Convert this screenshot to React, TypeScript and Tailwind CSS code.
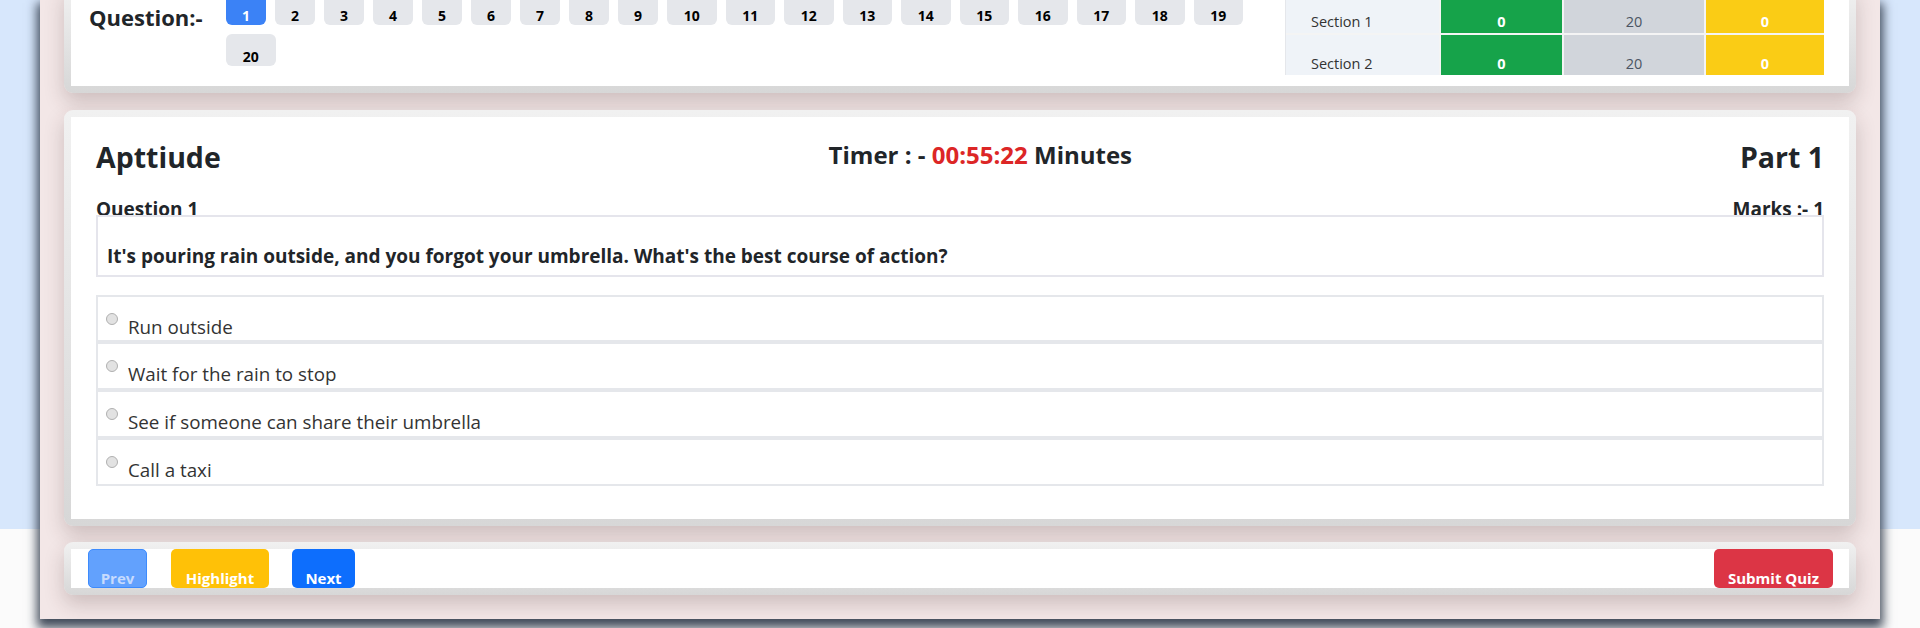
import React from 'react';

const questionNumbers = Array.from({ length: 20 }, (_, i) => i + 1);

const sections = [
  { name: 'Section 1', answered: 0, notAnswered: 20, marked: 0 },
  { name: 'Section 2', answered: 0, notAnswered: 20, marked: 0 },
];

const options = [
  'Run outside',
  'Wait for the rain to stop',
  'See if someone can share their umbrella',
  'Call a taxi',
];

const Card: React.FC<{ children: React.ReactNode; className?: string }> = ({ children, className = '' }) => (
  <div
    className={`rounded-[9px] bg-gradient-to-b from-[#f1f1f1] to-[#d7d7d7] p-[7px] shadow-[0_9px_20px_rgba(70,40,40,0.22)] ${className}`}
  >
    <div className="overflow-hidden bg-white">{children}</div>
  </div>
);

export default function App() {
  const current = 1;

  return (
    <div className="h-[628px] w-[1920px] overflow-hidden bg-[linear-gradient(to_bottom,#d7e7fc_529px,#fbfbfb_529px)] font-['Open_Sans',sans-serif] text-[#212529]">
      <div className="ml-[40px] flex h-[619px] w-[1840px] flex-col overflow-hidden bg-[#f3e7e7] px-[24px] shadow-[0_6px_10px_3px_rgba(55,65,81,0.95)]">
        {/* question navigator + section summary */}
        <Card className="-mt-[14px]">
          <div className="flex items-start justify-between pb-[11px] pl-[18px] pr-[25px]">
            <div className="flex items-start">
              <div className="mt-[11px] w-[137px] text-[22px] font-bold leading-[26px]">Question:-</div>
              <div className="flex w-[1045px] flex-wrap gap-[9px]">
                {questionNumbers.map((n) => (
                  <button
                    key={n}
                    type="button"
                    className={`flex h-[32px] items-end justify-center rounded-md pb-[2px] text-[14px] font-bold leading-[14px] ${
                      n < 10 ? 'w-[40px]' : 'w-[49.5px]'
                    } ${n === current ? 'bg-[#3b82f6] text-white' : 'bg-[#e5e7eb] text-black'}`}
                  >
                    {n}
                  </button>
                ))}
              </div>
            </div>

            <div className="grid grid-cols-[153px_121px_140px_118px] gap-[2px] border-l border-[#e5e7eb] bg-[#f4f4f4] text-[14.5px]">
              {sections.map((s) => (
                <React.Fragment key={s.name}>
                  <div className="flex h-[40px] items-end bg-[#eff3f8] pb-[1px] pl-[25px] leading-[20px] text-[#333]">
                    {s.name}
                  </div>
                  <div className="flex h-[40px] items-end justify-center bg-[#16a34a] pb-[1px] font-bold leading-[20px] text-white">
                    {s.answered}
                  </div>
                  <div className="flex h-[40px] items-end justify-center bg-[#d1d5db] pb-[1px] leading-[20px] text-[#4b5563]">
                    {s.notAnswered}
                  </div>
                  <div className="flex h-[40px] items-end justify-center bg-[#facc15] pb-[1px] font-bold leading-[20px] text-white">
                    {s.marked}
                  </div>
                </React.Fragment>
              ))}
            </div>
          </div>
        </Card>

        {/* question body */}
        <Card className="mt-[17px]">
          <div className="px-[25px] pb-[33px] pt-[26px]">
            <div className="flex items-start justify-between">
              <h3 className="text-[28.5px] font-bold leading-none">Apttiude</h3>
              <h5 className="text-[24px] font-bold leading-none">
                Timer : - <span className="text-[#dc2626]">00:55:22</span> Minutes
              </h5>
              <h3 className="text-[28.5px] font-bold leading-none">Part 1</h3>
            </div>

            <div className="mt-[28px] flex justify-between text-[19px] font-bold leading-[19px]">
              <span>Question 1</span>
              <span>Marks :- 1</span>
            </div>

            <div className="relative -mt-[4px] border-2 border-[#e5e5ec] bg-white pb-[7px] pl-[9px] pt-[27px] text-[19px] font-bold leading-[24px]">
              It's pouring rain outside, and you forgot your umbrella. What's the best course of action?
            </div>

            <div className="mt-[18px] flex flex-col">
              {options.map((opt) => (
                <label
                  key={opt}
                  className="flex h-[47.75px] items-start border-2 border-[#e5e7eb] pl-[8px] pt-[16px] text-[18.8px] leading-none text-[#333]"
                >
                  <span className="h-[12px] w-[12px] shrink-0 rounded-full border border-[#b0b0b0] bg-[#e2e2e2]" />
                  <span className="ml-[10px] mt-[5px]">{opt}</span>
                </label>
              ))}
            </div>
          </div>
        </Card>

        {/* footer actions */}
        <Card className="mt-[16px]">
          <div className="flex h-[39px] items-start justify-between pl-[17px] pr-[16px] text-[15px] font-bold leading-none">
            <div className="flex gap-[24px]">
              <button
                type="button"
                disabled
                className="h-[39px] w-[59px] rounded-[5px] border border-[#3d8bfd] bg-[#62a1fd] pt-[20px] text-[#c6dbfd]"
              >
                Prev
              </button>
              <button type="button" className="h-[39px] w-[98px] rounded-[5px] bg-[#ffc107] pt-[20px] text-white">
                Highlight
              </button>
              <button type="button" className="-ml-[1px] h-[39px] w-[63px] rounded-[5px] bg-[#0d6efd] pt-[20px] text-white">
                Next
              </button>
            </div>
            <button type="button" className="h-[39px] w-[119px] rounded-[5px] bg-[#dc3545] pt-[20px] text-white">
              Submit Quiz
            </button>
          </div>
        </Card>
      </div>
    </div>
  );
}
